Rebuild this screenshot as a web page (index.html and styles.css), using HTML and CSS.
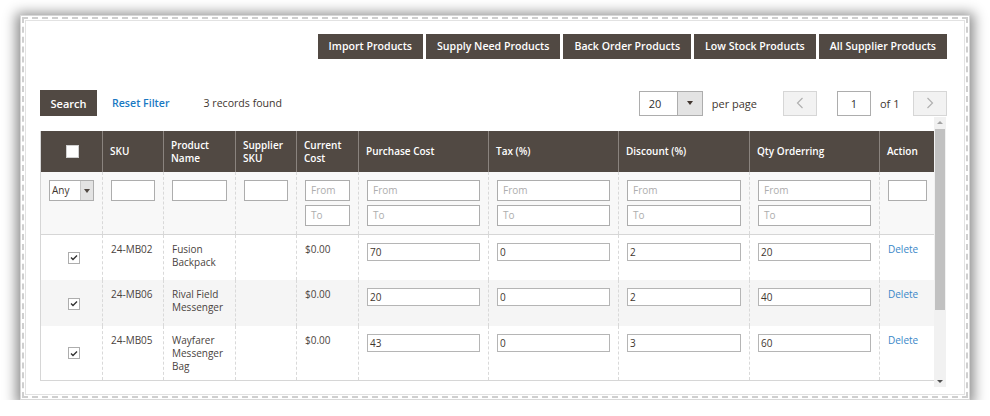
FILE: index.html
```html
<!DOCTYPE html>
<html>
<head>
<meta charset="utf-8">
<link rel="stylesheet" href="styles.css">
</head>
<body>
<div class="frame">
  <div class="frame-dash">
    <div class="frame-inner">
      <div class="toolbar">
        <button class="btn">Import Products</button>
        <button class="btn">Supply Need Products</button>
        <button class="btn">Back Order Products</button>
        <button class="btn">Low Stock Products</button>
        <button class="btn">All Supplier Products</button>
      </div>

      <div class="search-row">
        <div class="search-left">
          <button class="btn btn-search">Search</button>
          <a class="reset-link">Reset Filter</a>
          <span class="records">3 records found</span>
        </div>
        <div class="pager">
          <div class="perpage-select">
            <span class="perpage-value">20</span>
            <span class="perpage-arrow"><span class="tri-down"></span></span>
          </div>
          <span class="pager-label">per page</span>
          <span class="pager-btn prev">
            <svg width="8" height="12" viewBox="0 0 8 12"><polyline points="6.5,1 1.5,6 6.5,11" fill="none" stroke="#b0b0b0" stroke-width="1.2"/></svg>
          </span>
          <span class="page-input">1</span>
          <span class="pager-of">of 1</span>
          <span class="pager-btn next">
            <svg width="8" height="12" viewBox="0 0 8 12"><polyline points="1.5,1 6.5,6 1.5,11" fill="none" stroke="#b0b0b0" stroke-width="1.2"/></svg>
          </span>
        </div>
      </div>

      <div class="grid">
        <div class="grid-body">
          <table class="data-table">
            <colgroup>
              <col class="c-check"><col class="c-sku"><col class="c-name"><col class="c-ssku"><col class="c-cost">
              <col class="c-wide"><col class="c-wide"><col class="c-wide2"><col class="c-wide"><col class="c-action">
            </colgroup>
            <thead>
              <tr>
                <th class="th-check"><span class="hdr-box"></span></th>
                <th>SKU</th>
                <th>Product<br>Name</th>
                <th>Supplier<br>SKU</th>
                <th>Current<br>Cost</th>
                <th>Purchase Cost</th>
                <th>Tax (%)</th>
                <th>Discount (%)</th>
                <th>Qty Orderring</th>
                <th>Action</th>
              </tr>
            </thead>
            <tbody>
              <tr class="filter-row">
                <td>
                  <div class="any-select"><span class="any-text">Any</span><span class="any-arrow"><span class="tri-down small"></span></span></div>
                </td>
                <td><div class="f-input"></div></td>
                <td><div class="f-input"></div></td>
                <td><div class="f-input"></div></td>
                <td><div class="f-input ph">From</div><div class="f-input ph">To</div></td>
                <td><div class="f-input ph">From</div><div class="f-input ph">To</div></td>
                <td><div class="f-input ph">From</div><div class="f-input ph">To</div></td>
                <td><div class="f-input ph">From</div><div class="f-input ph">To</div></td>
                <td><div class="f-input ph">From</div><div class="f-input ph">To</div></td>
                <td><div class="f-input"></div></td>
              </tr>
              <tr class="row">
                <td class="td-check"><span class="chk"><svg width="8" height="7" viewBox="0 0 8 7"><polyline points="1,3.5 3,5.5 7,1.5" fill="none" stroke="#333" stroke-width="1.4"/></svg></span></td>
                <td class="nowrap">24-MB02</td>
                <td>Fusion<br>Backpack</td>
                <td></td>
                <td>$0.00</td>
                <td><div class="d-input">70</div></td>
                <td><div class="d-input">0</div></td>
                <td><div class="d-input">2</div></td>
                <td><div class="d-input">20</div></td>
                <td><a class="del">Delete</a></td>
              </tr>
              <tr class="row alt">
                <td class="td-check"><span class="chk"><svg width="8" height="7" viewBox="0 0 8 7"><polyline points="1,3.5 3,5.5 7,1.5" fill="none" stroke="#333" stroke-width="1.4"/></svg></span></td>
                <td class="nowrap">24-MB06</td>
                <td>Rival Field<br>Messenger</td>
                <td></td>
                <td>$0.00</td>
                <td><div class="d-input">20</div></td>
                <td><div class="d-input">0</div></td>
                <td><div class="d-input">2</div></td>
                <td><div class="d-input">40</div></td>
                <td><a class="del">Delete</a></td>
              </tr>
              <tr class="row last">
                <td class="td-check"><span class="chk"><svg width="8" height="7" viewBox="0 0 8 7"><polyline points="1,3.5 3,5.5 7,1.5" fill="none" stroke="#333" stroke-width="1.4"/></svg></span></td>
                <td class="nowrap">24-MB05</td>
                <td>Wayfarer<br>Messenger<br>Bag</td>
                <td></td>
                <td>$0.00</td>
                <td><div class="d-input">43</div></td>
                <td><div class="d-input">0</div></td>
                <td><div class="d-input">3</div></td>
                <td><div class="d-input">60</div></td>
                <td><a class="del">Delete</a></td>
              </tr>
            </tbody>
          </table>
        </div>
        <div class="scrollbar">
          <span class="sb-arrow"><span class="tri-up"></span></span>
          <span class="sb-thumb"></span>
          <span class="sb-fill"></span>
          <span class="sb-arrow"><span class="tri-down tiny"></span></span>
        </div>
      </div>
    </div>
  </div>
</div>
</body>
</html>
```

FILE: styles.css
```css
* { box-sizing: border-box; }

html, body {
  margin: 0;
  padding: 0;
  background: #ffffff;
}

body {
  font-family: "Open Sans", "Noto Sans", sans-serif;
  color: #303030;
  font-size: 11px;
}

.frame {
  margin: 15px 0 0 20px;
  width: 950px;
  height: 385px;
  border: 1px solid #d8d8d8;
  padding: 1px;
  background: #fff;
  box-shadow: 0 2px 12px 4px rgba(0, 0, 0, 0.45);
}

.frame-dash {
  height: 100%;
  border: 2px dashed #cfcfcf;
  padding: 1px;
}

.frame-inner {
  height: 100%;
  border: 1px solid #e2e2e2;
  padding: 13px 17px 0 14px;
}

/* toolbar buttons */
.toolbar {
  display: flex;
  justify-content: flex-end;
  gap: 3px;
}

.btn {
  font-family: "Open Sans", sans-serif;
  font-weight: 600;
  font-size: 10.6px;
  color: #ffffff;
  background: #514943;
  border: 1px solid #514943;
  height: 25px;
  padding: 0 10px;
  margin: 0;
  line-height: 23px;
  white-space: nowrap;
}

/* search row */
.search-row {
  margin-top: 31px;
  display: flex;
  justify-content: space-between;
  align-items: center;
  height: 26px;
}

.search-left {
  display: flex;
  align-items: center;
}

.btn-search {
  height: 26px;
  width: 57px;
  padding: 0;
  font-size: 11px;
}

.reset-link {
  margin-left: 15px;
  color: #1979c3;
  font-weight: 600;
  font-size: 10.6px;
}

.records {
  margin-left: 34px;
  font-size: 10.6px;
  color: #41362f;
}

.pager {
  display: flex;
  align-items: center;
  height: 25px;
}

.perpage-select {
  display: flex;
  width: 64px;
  height: 25px;
  border: 1px solid #adadad;
  background: #fff;
}

.perpage-value {
  flex: 1;
  padding-left: 9px;
  line-height: 23px;
  font-size: 11px;
}

.perpage-arrow {
  width: 25px;
  background: #e3e3e3;
  border-left: 1px solid #adadad;
  display: flex;
  align-items: center;
  justify-content: center;
}

.tri-down {
  width: 0;
  height: 0;
  border-left: 3.5px solid transparent;
  border-right: 3.5px solid transparent;
  border-top: 4px solid #41362f;
}

.tri-down.small {
  border-left-width: 3px;
  border-right-width: 3px;
  border-top-width: 4px;
  border-top-color: #514943;
}

.tri-down.tiny {
  border-left-width: 3px;
  border-right-width: 3px;
  border-top-width: 3px;
  border-top-color: #505050;
}

.tri-up {
  width: 0;
  height: 0;
  border-left: 3px solid transparent;
  border-right: 3px solid transparent;
  border-bottom: 3px solid #a3a3a3;
}

.pager-label {
  margin-left: 9px;
  font-size: 11px;
  color: #41362f;
}

.pager-btn {
  width: 34px;
  height: 25px;
  border: 1px solid #d6d6d6;
  background: #f2f2f2;
  display: flex;
  align-items: center;
  justify-content: center;
}

.pager-btn.prev {
  margin-left: 26px;
}

.page-input {
  margin-left: 20px;
  width: 34px;
  height: 25px;
  border: 1px solid #adadad;
  text-align: center;
  line-height: 23px;
  font-size: 11px;
  background: #fff;
}

.pager-of {
  margin-left: 9px;
  margin-right: 15px;
  width: 18px;
  font-size: 11px;
  color: #41362f;
  white-space: nowrap;
}

/* grid */
.grid {
  margin-top: 1px;
  display: flex;
  height: 270px;
}

.grid-body {
  width: 894px;
  padding-top: 14px;
  overflow: hidden;
}

.data-table {
  width: 894px;
  border-collapse: collapse;
  table-layout: fixed;
  border-left: 1px solid #d6d6d6;
  border-bottom: 1px solid #d6d6d6;
}

col.c-check { width: 62px; }
col.c-sku { width: 61px; }
col.c-name { width: 72px; }
col.c-ssku { width: 61px; }
col.c-cost { width: 62px; }
col.c-wide { width: 130px; }
col.c-wide2 { width: 131px; }
col.c-action { width: 55px; }

.data-table th {
  background: #514943;
  color: #ffffff;
  font-weight: 600;
  font-size: 10px;
  line-height: 13px;
  text-align: left;
  vertical-align: middle;
  height: 41px;
  padding: 0 7px;
  border-left: 1px solid #8a837e;
}

.data-table th:first-child {
  border-left: none;
}

.data-table th.th-check {
  text-align: center;
  padding: 0;
}

.hdr-box {
  display: inline-block;
  width: 13px;
  height: 13px;
  background: #fff;
  border: 1px solid #d0d0d0;
  vertical-align: middle;
  margin-left: 1px;
}

.data-table td {
  padding: 8px;
  vertical-align: top;
  border-left: 1px dashed #d9d9d9;
  font-size: 10px;
  line-height: 13px;
  color: #4a4340;
}

.data-table td.nowrap {
  white-space: nowrap;
  padding-right: 2px;
}

.data-table td:first-child {
  border-left: none;
}

.filter-row td {
  background: #f8f8f8;
  height: 62px;
  border-bottom: 1px solid #d6d6d6;
  padding: 8px 8px 0 8px;
}

.f-input {
  height: 21px;
  border: 1px solid #adadad;
  background: #fff;
  font-size: 10px;
  line-height: 19px;
  padding-left: 5px;
  color: #adadad;
}

.f-input + .f-input {
  margin-top: 4px;
}

.any-select {
  display: flex;
  height: 21px;
  width: 45px;
  border: 1px solid #adadad;
  background: #fff;
}

.any-text {
  flex: 1;
  font-size: 10px;
  line-height: 19px;
  padding-left: 2px;
  color: #41362f;
}

.any-arrow {
  width: 13px;
  background: #e3e3e3;
  border-left: 1px solid #c8c8c8;
  display: flex;
  align-items: center;
  justify-content: center;
}

.row td {
  background: #fff;
  padding-top: 8px;
  padding-bottom: 6px;
}

.row.alt td {
  background: #f5f5f5;
}

.row td:first-child { height: 46px; }
.row.last td:first-child { height: 54px; }

.row td.td-check {
  vertical-align: middle;
  text-align: center;
  padding: 0 0 0 4px;
}

.chk {
  display: inline-flex;
  align-items: center;
  justify-content: center;
  width: 12px;
  height: 12px;
  border: 1px solid #adadad;
  background: #fff;
  vertical-align: middle;
}

.d-input {
  height: 18px;
  border: 1px solid #b5b5b5;
  background: #fff;
  font-size: 10px;
  line-height: 16px;
  padding-left: 2px;
  color: #41362f;
}

.del {
  color: #3a87c8;
  font-size: 10px;
}

/* scrollbar */
.scrollbar {
  width: 12px;
  height: 270px;
  background: #f1f1f1;
  display: flex;
  flex-direction: column;
  align-items: center;
}

.sb-arrow {
  height: 11px;
  width: 12px;
  display: flex;
  align-items: center;
  justify-content: center;
}

.sb-thumb {
  margin-top: 1px;
  width: 10px;
  height: 181px;
  background: #c1c1c1;
}

.sb-fill {
  flex: 1;
}
```
